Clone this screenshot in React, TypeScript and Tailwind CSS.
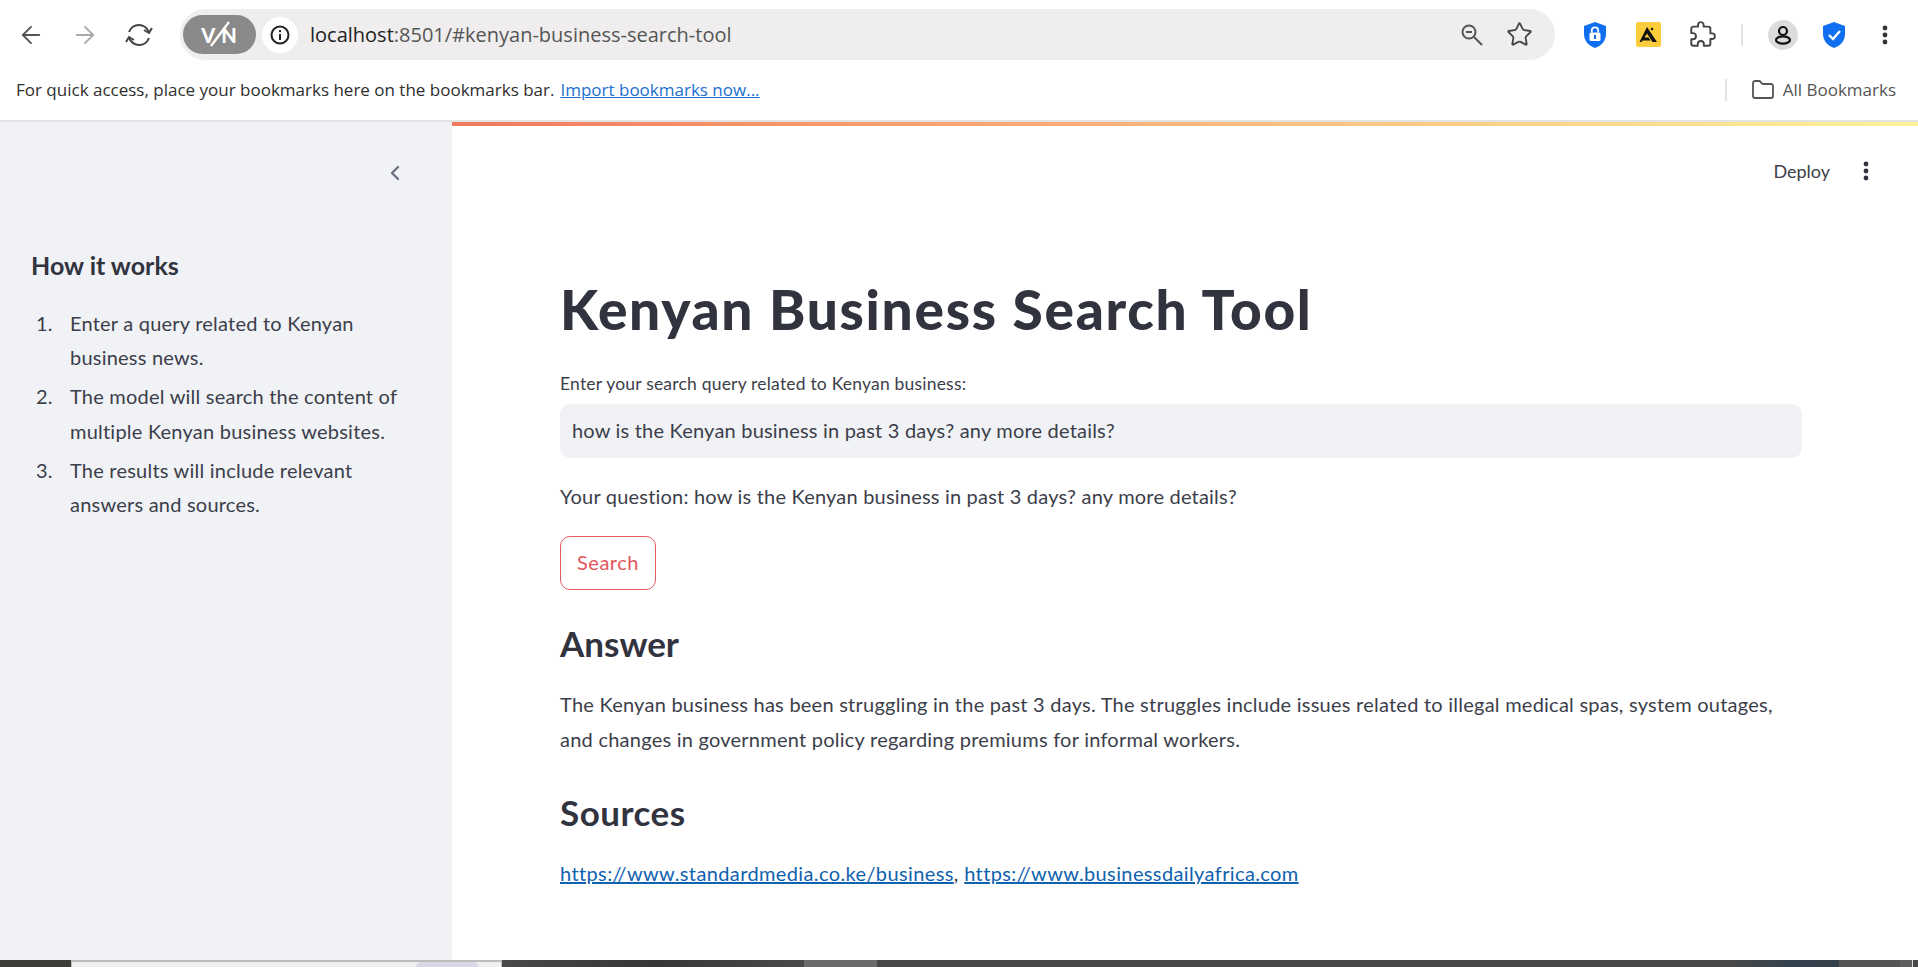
import { ArrowLeft, ArrowRight, Star, Folder, ChevronLeft } from "lucide-react";

const sans = "[font-family:'Lato','Noto_Sans',sans-serif]";

function Shield({ check }: { check?: boolean }) {
  return (
    <svg width="26" height="28" viewBox="0 0 26 28">
      <path d="M13 1 L24 5 V13 C24 20 19 25 13 27 C7 25 2 20 2 13 V5 Z" fill="#0f6ff0" />
      {check ? (
        <path d="M8 14 L12 18 L19 10" fill="none" stroke="#fff" strokeWidth="2.4" />
      ) : (
        <>
          <rect x="7.5" y="11.5" width="11" height="8.5" rx="1.5" fill="#fff" />
          <path d="M9.8 11.5 V9.5 a3.2 3.2 0 0 1 6.4 0 V11.5" fill="none" stroke="#fff" strokeWidth="1.8" />
          <rect x="12" y="14" width="2" height="4" fill="#0f6ff0" />
        </>
      )}
    </svg>
  );
}

function Dots({ className }: { className: string }) {
  return (
    <svg width="6" height="20" viewBox="0 0 6 20" className={className} fill="currentColor">
      <circle cx="3" cy="3" r="2.4" />
      <circle cx="3" cy="10" r="2.4" />
      <circle cx="3" cy="17" r="2.4" />
    </svg>
  );
}

const steps = [
  "Enter a query related to Kenyan business news.",
  "The model will search the content of multiple Kenyan business websites.",
  "The results will include relevant answers and sources.",
];

export default function App() {
  return (
    <div className={`flex h-[967px] flex-col overflow-hidden bg-white ${sans}`}>
      <header className="h-[120px] shrink-0 bg-white">
        <div className="flex h-[69px] items-center">
          <div className="flex w-[180px] items-center pl-[17px]">
            <ArrowLeft size={28} strokeWidth={1.6} className="text-[#555]" />
            <ArrowRight size={28} strokeWidth={1.6} className="ml-[26px] text-[#aaa]" />
            <svg width="30" height="30" viewBox="0 0 30 30" className="ml-[25px]" fill="none" stroke="#444" strokeWidth="2">
              <path d="M5 12 C7 7 11 5 15 5 C20 5 23 8 25 12" />
              <path d="M25 18 C23 23 19 25 15 25 C10 25 7 22 5 18" />
              <path d="M28 8 L25 13 L20 10" />
              <path d="M2 22 L5 17 L10 20" />
            </svg>
          </div>
          <div className="flex h-[51px] w-[1375px] items-center rounded-full bg-[#efeded] pl-[3px] pr-[22px]">
            <div className="relative flex h-[39px] w-[73px] items-center justify-center rounded-full bg-[#8a8a8a] text-[20px] font-black tracking-[1px] text-white">
              V&nbsp;N
              <svg width="28" height="28" viewBox="0 0 28 28" className="absolute left-[23px] top-[5px]" fill="none" stroke="#fff" strokeWidth="2.4">
                <path d="M5 26 L23 2" />
              </svg>
            </div>
            <div className="ml-[6px] flex h-[36px] w-[36px] items-center justify-center rounded-full bg-white">
              <svg width="22" height="22" viewBox="0 0 22 22" fill="none" stroke="#222" strokeWidth="2">
                <circle cx="11" cy="11" r="8.5" />
                <path d="M11 10 V16 M11 6 V8.2" />
              </svg>
            </div>
            <span className="ml-[12px] text-[20px] text-[#555] [font-family:'Open_Sans',sans-serif]">
              <span className="text-[#222]">localhost</span>:8501/#kenyan-business-search-tool
            </span>
            <svg width="26" height="26" viewBox="0 0 26 26" className="ml-auto" fill="none" stroke="#555" strokeWidth="2">
              <circle cx="10" cy="10" r="6.5" />
              <path d="M7 10 H13 M15 15 L23 23" />
            </svg>
            <Star size={27} strokeWidth={1.6} className="ml-[21px] text-[#444]" />
          </div>
          <div className="flex flex-1 items-center">
            <div className="ml-[27px]"><Shield /></div>
            <div className="ml-[28px] flex h-[25px] w-[25px] items-center justify-center rounded-[2px] bg-[#fbcd3c]">
              <svg width="19" height="19" viewBox="0 0 19 19" fill="#111">
                <path d="M8 2 L18 17 H13.5 L8 8.5 L5.5 12.5 L9.5 12.5 L11.5 15.5 L3.5 15.5 L2.5 17 H0.5 Z" />
                <circle cx="13" cy="4" r="1.2" />
              </svg>
            </div>
            <svg width="27" height="27" viewBox="0 0 24 24" className="ml-[28px]" fill="none" stroke="#444" strokeWidth="1.7" strokeLinejoin="round">
              <path d="M20.5 11H19V7c0-1.1-.9-2-2-2h-4V3.5C13 2.12 11.88 1 10.5 1S8 2.12 8 3.5V5H4c-1.1 0-1.99.9-1.99 2v3.8H3.5c1.49 0 2.7 1.21 2.7 2.7s-1.21 2.7-2.7 2.7H2V20c0 1.1.9 2 2 2h3.8v-1.5c0-1.49 1.21-2.7 2.7-2.7 1.49 0 2.7 1.21 2.7 2.7V22H17c1.1 0 2-.9 2-2v-4h1.5c1.38 0 2.5-1.12 2.5-2.5S21.88 11 20.5 11z" />
            </svg>
            <div className="ml-[25px] h-[22px] w-[2px] bg-[#e3e3e3]" />
            <div className="ml-[25px] flex h-[30px] w-[30px] items-center justify-center rounded-full bg-[#dcdcdc]">
              <svg width="18" height="20" viewBox="0 0 18 20" fill="none" stroke="#111" strokeWidth="2.2">
                <circle cx="9" cy="6" r="4" />
                <ellipse cx="9" cy="15" rx="7" ry="3.6" />
              </svg>
            </div>
            <div className="ml-[23px]"><Shield check /></div>
            <Dots className="ml-[35px] text-[#333]" />
          </div>
        </div>
        <div className="flex h-[41px] items-center pl-[16px] pr-[22px] text-[17px] text-[#2f2f2f] [font-family:'Open_Sans',sans-serif]">
          <span>For quick access, place your bookmarks here on the bookmarks bar.</span>
          <a className="ml-[6px] text-[#1a6fd0] underline">Import bookmarks now...</a>
          <div className="ml-auto h-[22px] w-[2px] bg-[#e3e3e3]" />
          <Folder size={24} strokeWidth={1.8} className="ml-[24px] text-[#555]" />
          <span className="ml-[8px] text-[#555]">All Bookmarks</span>
        </div>
      </header>
      <div className="h-[2px] shrink-0 bg-[#e2e3e3]" />
      <div className="flex min-h-0 flex-1">
        <aside className="flex w-[452px] shrink-0 flex-col bg-[#f0f2f6] pl-[31px] pr-[40px] text-[#31333f]">
          <ChevronLeft size={24} strokeWidth={2.4} className="ml-[352px] mt-[39px] text-[#6d7280]" />
          <h2 className="mt-[64px] text-[25px] font-bold leading-[32px]">How it works</h2>
          <ol className="mt-[25px] text-[20px] leading-[34.2px] tracking-[0.22px] text-[#3c3e4a]">
            {steps.map((s, i) => (
              <li key={s} className="mb-[5px] flex">
                <span className="w-[39px] shrink-0 pl-[5px]">{i + 1}.</span>
                <span>{s}</span>
              </li>
            ))}
          </ol>
        </aside>
        <main className="flex min-w-0 flex-1 flex-col text-[#3c3e4a]">
          <div className="h-[4px] shrink-0 bg-gradient-to-r from-[#f0795f] to-[#fbf29a]" />
          <div className="flex h-[90px] items-center justify-end pr-[49px]">
            <span className="text-[18px]">Deploy</span>
            <Dots className="ml-[33px] text-[#31333f]" />
          </div>
          <div className="pl-[108px] pr-[116px]">
            <h1 className="mt-[60px] text-[55px] font-black leading-[66px] tracking-[1.7px] text-[#31333f]">Kenyan Business Search Tool</h1>
            <label className="mt-[30px] block text-[17.5px] leading-[24px] tracking-[0.2px]">Enter your search query related to Kenyan business:</label>
            <div className="mt-[8px] flex h-[54px] items-center rounded-[10px] bg-[#f0f2f6] px-[12px] pb-[2px] text-[20px] tracking-[0.2px]">
              how is the Kenyan business in past 3 days? any more details?
            </div>
            <p className="mt-[21px] text-[20px] leading-[34px] tracking-[0.2px]">Your question: how is the Kenyan business in past 3 days? any more details?</p>
            <button className="mt-[23px] flex h-[54px] w-[96px] items-center justify-center rounded-[10px] border border-[#e05a5f] pb-[2px] text-[20px] tracking-[0.5px] text-[#e0565b]">Search</button>
            <h3 className="mt-[31px] text-[35px] font-bold leading-[44px] text-[#31333f]">Answer</h3>
            <p className="mt-[22px] text-[20px] leading-[35px] tracking-[0.24px]">The Kenyan business has been struggling in the past 3 days. The struggles include issues related to illegal medical spas, system outages, and changes in government policy regarding premiums for informal workers.</p>
            <h3 className="mt-[33px] text-[35px] font-bold leading-[44px] tracking-[0.5px] text-[#31333f]">Sources</h3>
            <p className="mt-[22px] text-[20px] leading-[35px] tracking-[0.38px]">
              <a className="text-[#0f62ae] underline">https://www.standardmedia.co.ke/business</a>, <a className="text-[#0f62ae] underline">https://www.businessdailyafrica.com</a>
            </p>
          </div>
        </main>
      </div>
      <footer className="flex h-[7px] shrink-0 bg-[#484848]">
        <div className="w-[71px] bg-[#3d3d38]" />
        <div className="flex w-[431px] border-x border-t-2 border-[#bdbdbd] bg-[#efefef]">
          <div className="ml-[344px] h-full w-[62px] rounded-t-full bg-[#d9d8e6]" />
        </div>
        <div className="w-[302px] bg-gradient-to-r from-[#484848] via-[#363636] to-[#4a4a4a]" />
        <div className="w-[73px] bg-[#6b6b6b]" />
        <div className="w-[854px] bg-[#484848]" />
        <div className="w-[108px] bg-gradient-to-r from-[#484848] via-[#34424d] to-[#34404a]" />
        <div className="w-[61px] bg-[#555]" />
        <div className="w-[12px] bg-[#5e5e5e]" />
        <div className="w-[1px] bg-[#ddd]" />
      </footer>
    </div>
  );
}
